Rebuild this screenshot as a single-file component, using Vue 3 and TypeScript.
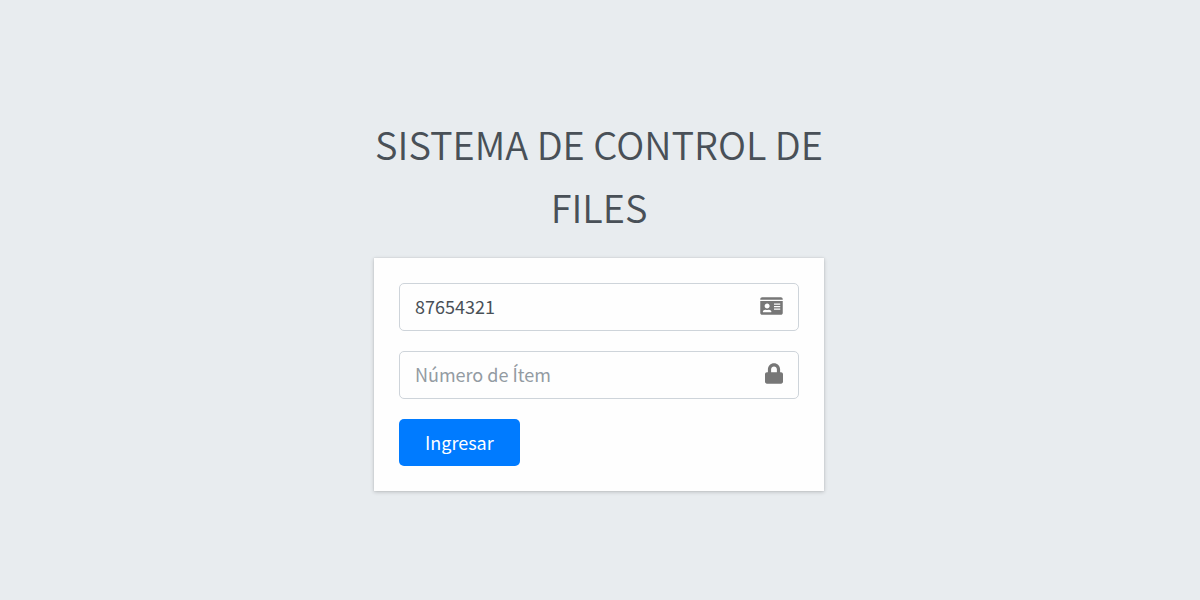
<script setup lang="ts">
import { ref } from 'vue'

const documentId = ref('87654321')
const itemNumber = ref('')
</script>

<template>
  <main class="login-page">
    <div class="login-box">
      <h1 class="login-title">SISTEMA DE CONTROL DE FILES</h1>
      <form class="card" @submit.prevent>
        <div class="field">
          <input v-model="documentId" class="field-input" type="text" aria-label="Número de documento" />
          <svg class="icon icon-card" viewBox="0 0 576 512" aria-hidden="true">
            <path
              d="M528 32H48C21.500 32 0 53.500 0 80v16h576V80c0-26.500-21.500-48-48-48zM0 432c0 26.500 21.500 48 48 48h480c26.500 0 48-21.500 48-48V128H0v304zm352-232c0-4.400 3.600-8 8-8h144c4.400 0 8 3.600 8 8v16c0 4.400-3.600 8-8 8H360c-4.400 0-8-3.600-8-8v-16zm0 64c0-4.400 3.600-8 8-8h144c4.400 0 8 3.600 8 8v16c0 4.400-3.600 8-8 8H360c-4.400 0-8-3.600-8-8v-16zm0 64c0-4.400 3.600-8 8-8h144c4.400 0 8 3.600 8 8v16c0 4.400-3.600 8-8 8H360c-4.400 0-8-3.600-8-8v-16zM176 192c35.300 0 64 28.700 64 64s-28.700 64-64 64-64-28.700-64-64 28.700-64 64-64zM67.100 396.200C75.500 370.500 99.600 352 128 352h8.200c12.300 5.100 25.700 8 39.800 8s27.600-2.900 39.800-8h8.200c28.400 0 52.500 18.500 60.900 44.200 3.200 9.900-5.200 19.800-15.600 19.800H82.700c-10.400 0-18.800-10-15.600-19.800z"
            />
          </svg>
        </div>
        <div class="field">
          <input v-model="itemNumber" class="field-input" type="password" placeholder="Número de Ítem" aria-label="Número de Ítem" />
          <svg class="icon icon-lock" viewBox="0 0 448 512" aria-hidden="true">
            <path
              d="M400 224h-24v-72C376 68.200 307.800 0 224 0S72 68.200 72 152v72H48c-26.500 0-48 21.500-48 48v192c0 26.500 21.500 48 48 48h352c26.500 0 48-21.500 48-48V272c0-26.500-21.500-48-48-48zm-104 0H152v-72c0-39.700 32.300-72 72-72s72 32.300 72 72v72z"
            />
          </svg>
        </div>
        <button class="submit" type="submit">Ingresar</button>
      </form>
    </div>
  </main>
</template>

<style>
body {
  margin: 0;
  background: #e8ecef;
}
</style>

<style scoped>
.login-page {
  box-sizing: border-box;
  min-height: 100vh;
  display: flex;
  align-items: center;
  justify-content: center;
  background: #e8ecef;
  color: #495057;
  font-family: "Source Sans Pro", "Noto Sans CJK SC", "Noto Sans", sans-serif;
}

.login-box {
  width: 100%;
  max-width: 450px;
  padding-top: 2px;
  margin-right: 2px;
}

.login-title {
  margin: 0 0 20px;
  font-size: 38px;
  font-weight: 350;
  line-height: 63px;
  text-align: center;
}

.card {
  box-sizing: border-box;
  display: flex;
  flex-direction: column;
  align-items: flex-start;
  gap: 20px;
  padding: 25px;
  background: #fefefe;
  box-shadow: 0 0 1px rgba(0, 0, 0, 0.13), 0 1px 4px rgba(0, 0, 0, 0.2);
}

.field {
  box-sizing: border-box;
  width: 100%;
  height: 48px;
  display: flex;
  align-items: center;
  padding: 0 15px 2px;
  border: 1px solid #ced4da;
  border-radius: 5px;
}

.field:focus-within {
  border-color: #80bdff;
}

.field-input {
  flex: 1;
  min-width: 0;
  padding: 0;
  border: 0;
  outline: 0;
  background: transparent;
  color: #495057;
  font: inherit;
  font-size: 18px;
  line-height: 30px;
}

.field-input::placeholder {
  color: #939ba2;
  opacity: 1;
}

.icon {
  flex: none;
  fill: #777777;
}

.icon-card {
  width: 23px;
  height: 20px;
}

.icon-lock {
  width: 18px;
  height: 21px;
}

.submit {
  height: 47px;
  padding: 0 26px;
  border: 0;
  border-radius: 5px;
  background: #007bff;
  color: #ffffff;
  font: inherit;
  font-size: 18px;
  cursor: pointer;
}
</style>
